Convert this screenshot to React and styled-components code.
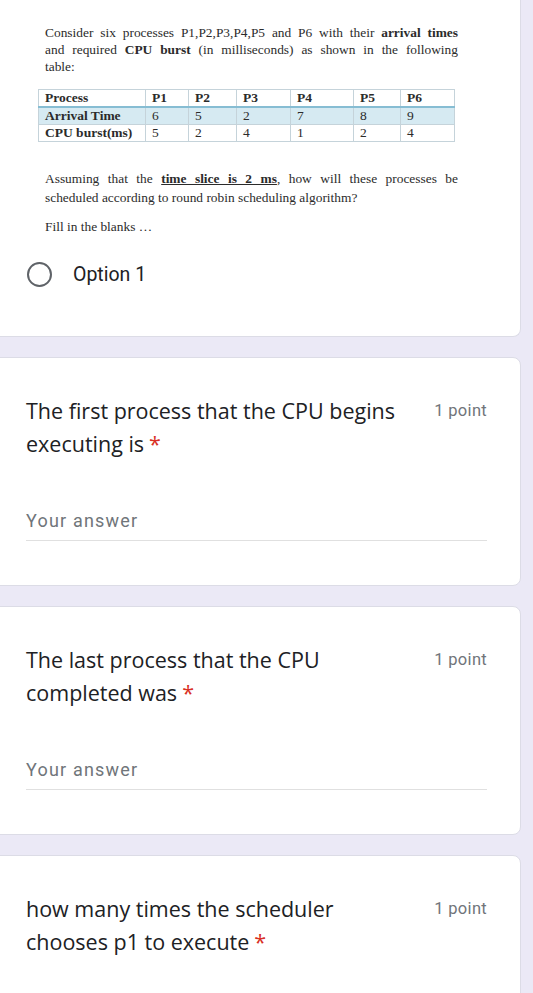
import React from 'react';
import styled, { createGlobalStyle } from 'styled-components';

const GlobalStyle = createGlobalStyle`
  body {
    margin: 0;
    background: #ebe9f6;
    font-family: Roboto, "Liberation Sans", sans-serif;
    overflow: hidden;
  }
`;

const Page = styled.div`
  display: flex;
  flex-direction: column;
  gap: 20px;
  padding: 0 12px 40px 0;
`;

const Card = styled.section`
  margin-left: -12px;
  background: #fff;
  border: 1px solid #dcdce6;
  border-top: ${(p) => (p.$first ? 'none' : '1px solid #dcdce6')};
  border-radius: ${(p) => (p.$first ? '0 0 8px 8px' : '8px')};
  padding-bottom: ${(p) => p.$pb || 44}px;
`;

/* scanned document part */
const Doc = styled.div`
  padding: 24px 0 0 49px;
  font-family: "Liberation Serif", serif;
  color: #2b2b2b;
`;

const DocPara = styled.div`
  width: 413px;
  margin: ${(p) => p.$mt || 0}px 0 0 7px;
  font-size: 13.4px;
  line-height: ${(p) => p.$lh || 17}px;
`;

const Line = styled.div`
  text-align: justify;
  text-align-last: ${(p) => (p.$last ? 'left' : 'justify')};
  white-space: nowrap;
`;

const Under = styled.span`
  font-weight: bold;
  text-decoration: underline;
`;

const Table = styled.table`
  margin-top: 14px;
  border-collapse: collapse;
  font-size: 13.5px;
  width: 416px;
  table-layout: fixed;
`;

const Row = styled.tr`
  background: ${(p) => (p.$shade ? '#d6eaf2' : '#fff')};
  border-top: ${(p) => (p.$shade ? '2px solid #86bdd3' : '1px solid #c5d3da')};
`;

const Cell = styled.td`
  border: 1px solid #c5d3da;
  border-top: none;
  height: 16px;
  padding: 0 0 0 6px;
  line-height: 16px;
  white-space: nowrap;
  font-weight: ${(p) => (p.$bold ? 'bold' : 'normal')};
`;

const OptionRow = styled.div`
  display: flex;
  align-items: center;
  gap: 21px;
  margin: 27px 0 0 38px;
`;

const Radio = styled.span`
  box-sizing: border-box;
  width: 25px;
  height: 25px;
  border: 2.5px solid #5f6368;
  border-radius: 50%;
`;

const OptionLabel = styled.span`
  font-size: 19.5px;
  color: #202124;
`;

/* question cards */
const TitleRow = styled.div`
  display: flex;
  justify-content: space-between;
  gap: 12px;
  padding: 36px 33px 0 37px;
`;

const Title = styled.div`
  font-family: "Open Sans", Roboto, sans-serif;
  font-size: 21.5px;
  line-height: 33px;
  color: #202124;
  white-space: nowrap;
`;

const Star = styled.span`
  color: #d93025;
  margin-left: 5px;
`;

const Points = styled.div`
  flex: none;
  font-size: 16.5px;
  letter-spacing: 0.3px;
  line-height: 33px;
  color: #70757a;
`;

const Answer = styled.div`
  margin: 49px 33px 0 37px;
  padding-bottom: 7px;
  border-bottom: 1px solid #e0e0e0;
  font-size: 18px;
  line-height: 24px;
  letter-spacing: 1.2px;
  color: #70757a;
`;

const table = [
  ['Arrival Time', 6, 5, 2, 7, 8, 9],
  ['CPU burst(ms)', 5, 2, 4, 1, 2, 4],
];
const widths = [107, 43, 48, 54, 63, 47, 54];

const Question = ({ lines }) => (
  <Card>
    <TitleRow>
      <Title>
        {lines[0]}
        <br />
        {lines[1]}
        <Star>*</Star>
      </Title>
      <Points>1 point</Points>
    </TitleRow>
    <Answer>Your answer</Answer>
  </Card>
);

export default function App() {
  return (
    <>
      <GlobalStyle />
      <Page>
        <Card $first $pb={49}>
          <Doc>
            <DocPara>
              <Line>
                Consider six processes P1,P2,P3,P4,P5 and P6 with their <b>arrival times</b>
              </Line>
              <Line>
                and required <b>CPU burst</b> (in milliseconds) as shown in the following
              </Line>
              <Line $last>table:</Line>
            </DocPara>
            <Table>
              <colgroup>
                {widths.map((w, i) => (
                  <col key={i} style={{ width: w }} />
                ))}
              </colgroup>
              <tbody>
                <Row>
                  {['Process', 'P1', 'P2', 'P3', 'P4', 'P5', 'P6'].map((h) => (
                    <Cell key={h} $bold>{h}</Cell>
                  ))}
                </Row>
                {table.map((r, i) => (
                  <Row key={r[0]} $shade={i === 0}>
                    {r.map((c, j) => (
                      <Cell key={j} $bold={j === 0}>{c}</Cell>
                    ))}
                  </Row>
                ))}
              </tbody>
            </Table>
            <DocPara $mt={28} $lh={18.5}>
              <Line>
                Assuming that the <Under>time slice is 2 ms</Under>, how will these processes be
              </Line>
              <Line $last>scheduled according to round robin scheduling algorithm?</Line>
            </DocPara>
            <DocPara $mt={11} $lh={17}>
              <Line $last>Fill in the blanks …</Line>
            </DocPara>
          </Doc>
          <OptionRow>
            <Radio />
            <OptionLabel>Option 1</OptionLabel>
          </OptionRow>
        </Card>
        <Question lines={['The first process that the CPU begins', 'executing is']} />
        <Question lines={['The last process that the CPU', 'completed was']} />
        <Question lines={['how many times the scheduler', 'chooses p1 to execute']} />
      </Page>
    </>
  );
}
